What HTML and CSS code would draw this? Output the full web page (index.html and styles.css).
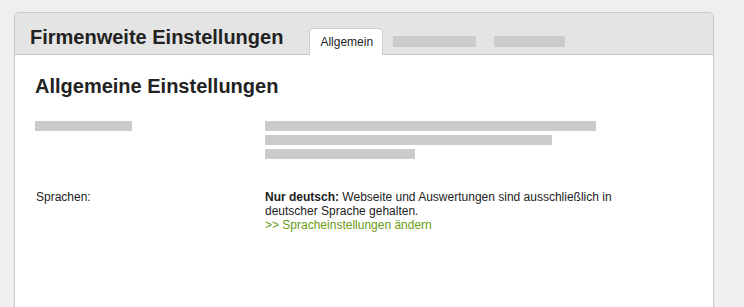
FILE: index.html
```html
<!DOCTYPE html>
<html>
<head>
  <meta charset="UTF-8">
  <title>Firmenweite Einstellungen</title>
  <link rel="stylesheet" href="styles.css">
</head>
<body>

  <div class="panel">
    <div class="panel-head">
      <h1>Firmenweite Einstellungen</h1>
      <div class="tabs">
        <span class="tab active">Allgemein</span>
        <span class="tab-placeholder wide"></span>
        <span class="tab-placeholder narrow"></span>
      </div>
    </div>

    <div class="panel-body">
      <h2>Allgemeine Einstellungen</h2>

      <div class="row">
        <div class="label"><span class="bar" style="width: 97px"></span></div>
        <div class="value">
          <span class="bar" style="width: 331px"></span>
          <span class="bar" style="width: 287px"></span>
          <span class="bar" style="width: 150px"></span>
        </div>
      </div>

      <div class="row text-row">
        <div class="label">Sprachen:</div>
        <div class="value">
          <p><b>Nur deutsch:</b> Webseite und Auswertungen sind ausschließlich in deutscher Sprache gehalten.</p>
          <a href="#">&gt;&gt; Spracheinstellungen ändern</a>
        </div>
      </div>
    </div>
  </div>

</body>
</html>
```

FILE: styles.css
```css
* {
  margin: 0;
  padding: 0;
  box-sizing: border-box;
}

body {
  font-family: 'Liberation Sans', Arial, sans-serif;
  font-size: 12px;
  color: #222;
  background: #efefef;
  padding: 12px 0 0 14px;
}

.panel {
  width: 700px;
  min-height: 300px;
  background: #fff;
  border: 1px solid #c9c9c9;
  border-radius: 5px 5px 0 0;
}

.panel-head {
  height: 42px;
  display: flex;
  align-items: flex-end;
  background: #e4e4e4;
  border-bottom: 1px solid #c9c9c9;
  border-radius: 4px 4px 0 0;
  padding-left: 15px;
}

h1 {
  font-size: 20px;
  line-height: 24px;
  font-weight: bold;
  color: #222;
  margin-bottom: 5px;
}

.tabs {
  display: flex;
  align-items: flex-end;
  margin-left: 26px;
}

.tab {
  display: block;
  height: 27px;
  padding: 6px 10px 0;
  font-size: 12px;
  line-height: 14px;
  background: #fff;
  border: 1px solid #cfcfcf;
  border-bottom: none;
  border-radius: 5px 5px 0 0;
  width: 74px;
  text-align: center;
  margin-bottom: -1px;
}

.tab-placeholder {
  display: block;
  height: 11px;
  background: #cbcbcb;
  margin-bottom: 7px;
}

.tab-placeholder.wide {
  width: 83px;
  margin-left: 10px;
}

.tab-placeholder.narrow {
  width: 71px;
  margin-left: 18px;
}

.panel-body {
  padding: 19px 20px 0;
}

h2 {
  font-size: 20px;
  line-height: 24px;
  font-weight: bold;
  color: #222;
}

.row {
  display: flex;
  margin-top: 23px;
}

.row .label {
  width: 230px;
  flex-shrink: 0;
}

.row .value {
  width: 360px;
  display: flex;
  flex-direction: column;
  gap: 4px;
}

.bar {
  display: block;
  height: 10px;
  background: #cbcbcb;
}

.text-row {
  margin-top: 31px;
  line-height: normal;
}

.text-row .label {
  padding-left: 1px;
}

.text-row .value {
  display: block;
}

a {
  display: block;
  color: #6a9b12;
  text-decoration: none;
}
```
